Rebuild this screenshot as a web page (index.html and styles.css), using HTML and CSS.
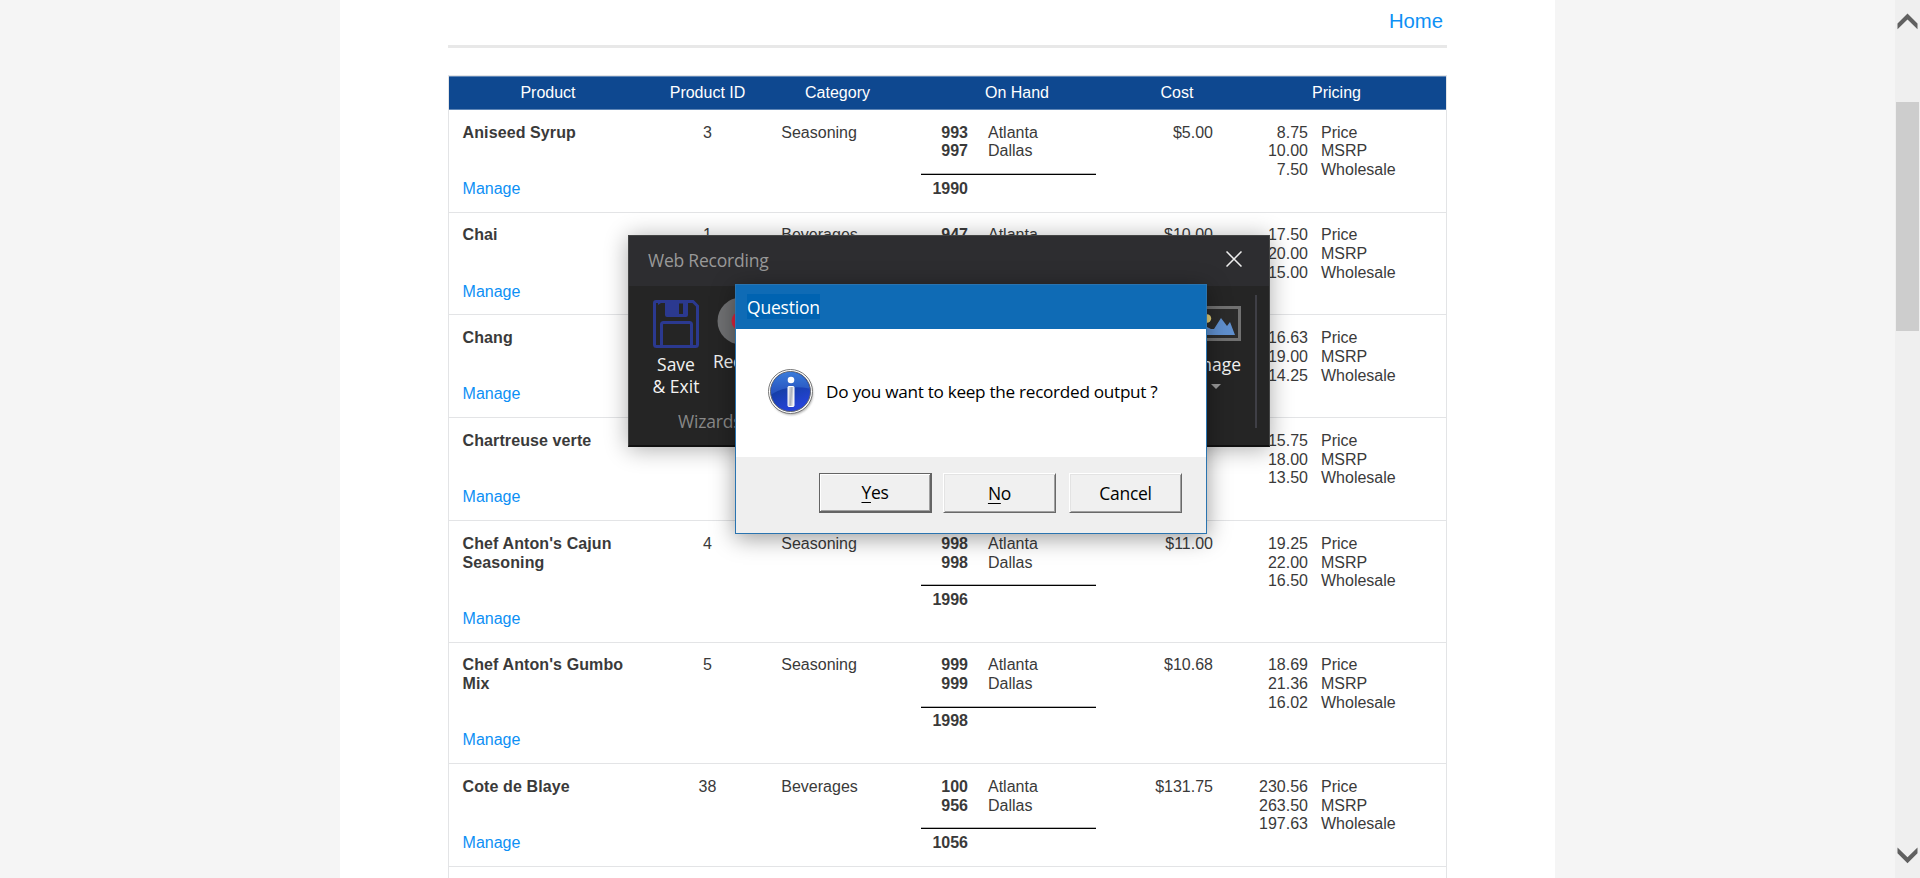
FILE: index.html
```html
<!DOCTYPE html>
<html lang="en">
<head>
<meta charset="utf-8">
<title>Products</title>
<link rel="stylesheet" href="styles.css">
</head>
<body>
<div class="page">
  <main class="sheet">
    <nav class="topnav"><a>Home</a></nav>
    <section class="products">
      <div class="row head"><div>Product</div><div>Product ID</div><div>Category</div><div>On Hand</div><div>Cost</div><div>Pricing</div></div>

      <div class="row">
        <div class="name"><b>Aniseed Syrup</b><a>Manage</a></div><div class="id">3</div><div class="cat">Seasoning</div>
        <div class="stock"><b>993</b><span>Atlanta</span><b>997</b><span>Dallas</span><hr><b>1990</b></div>
        <div class="cost">$5.00</div>
        <div class="pricing"><i>8.75</i><span>Price</span><i>10.00</i><span>MSRP</span><i>7.50</i><span>Wholesale</span></div>
      </div>

      <div class="row">
        <div class="name"><b>Chai</b><a>Manage</a></div><div class="id">1</div><div class="cat">Beverages</div>
        <div class="stock"><b>947</b><span>Atlanta</span></div>
        <div class="cost">$10.00</div>
        <div class="pricing"><i>17.50</i><span>Price</span><i>20.00</i><span>MSRP</span><i>15.00</i><span>Wholesale</span></div>
      </div>

      <div class="row">
        <div class="name"><b>Chang</b><a>Manage</a></div><div class="id"></div><div class="cat"></div>
        <div class="stock"></div>
        <div class="cost"></div>
        <div class="pricing"><i>16.63</i><span>Price</span><i>19.00</i><span>MSRP</span><i>14.25</i><span>Wholesale</span></div>
      </div>

      <div class="row">
        <div class="name"><b>Chartreuse verte</b><a>Manage</a></div><div class="id"></div><div class="cat"></div>
        <div class="stock"></div>
        <div class="cost"></div>
        <div class="pricing"><i>15.75</i><span>Price</span><i>18.00</i><span>MSRP</span><i>13.50</i><span>Wholesale</span></div>
      </div>

      <div class="row">
        <div class="name"><b>Chef Anton's Cajun Seasoning</b><a>Manage</a></div><div class="id">4</div><div class="cat">Seasoning</div>
        <div class="stock"><b>998</b><span>Atlanta</span><b>998</b><span>Dallas</span><hr><b>1996</b></div>
        <div class="cost">$11.00</div>
        <div class="pricing"><i>19.25</i><span>Price</span><i>22.00</i><span>MSRP</span><i>16.50</i><span>Wholesale</span></div>
      </div>

      <div class="row">
        <div class="name"><b>Chef Anton's Gumbo Mix</b><a>Manage</a></div><div class="id">5</div><div class="cat">Seasoning</div>
        <div class="stock"><b>999</b><span>Atlanta</span><b>999</b><span>Dallas</span><hr><b>1998</b></div>
        <div class="cost">$10.68</div>
        <div class="pricing"><i>18.69</i><span>Price</span><i>21.36</i><span>MSRP</span><i>16.02</i><span>Wholesale</span></div>
      </div>

      <div class="row">
        <div class="name"><b>Cote de Blaye</b><a>Manage</a></div><div class="id">38</div><div class="cat">Beverages</div>
        <div class="stock"><b>100</b><span>Atlanta</span><b>956</b><span>Dallas</span><hr><b>1056</b></div>
        <div class="cost">$131.75</div>
        <div class="pricing"><i>230.56</i><span>Price</span><i>263.50</i><span>MSRP</span><i>197.63</i><span>Wholesale</span></div>
      </div>
      <div class="row next"></div>
    </section>
  </main>
  <aside class="scrollbar">
    <svg class="arrow" width="21" height="17" viewBox="0 0 21 17"><path d="M0.5 10.5 10.5 0.5 20.5 10.5V16.2L10.5 6.5 0.5 16.2Z"/></svg>
    <div class="thumb"></div>
    <svg class="arrow down" width="21" height="17" viewBox="0 0 21 17"><path d="M0.5 0.5V6.2L10.5 16.2 20.5 6.2V0.5L10.5 10.2Z"/></svg>
  </aside>
</div>

<section class="recorder">
  <header class="rec-title"><span>Web Recording</span>
    <svg width="16" height="16" viewBox="0 0 16 16"><path d="M.5.5 15.5 15.5M15.5.5.5 15.5"/></svg>
  </header>
  <div class="ribbon">
    <div class="tool save">
      <svg width="46" height="48" viewBox="0 0 46 48">
        <path d="M3 1.5H40L44.5 6V44.5Q44.5 46.5 42.500 46.5H3.500Q1.500 46.500 1.500 44.500V3Q1.500 1.500 3 1.500Z" class="line"/>
        <path d="M8.500 46V24.500Q8.500 22.500 10.500 22.500H36.500Q38.500 22.500 38.500 24.500V46" class="line"/>
        <path d="M12 1H35V15Q35 17 33 17H14Q12 17 12 15ZM26 3.500V14H30V3.500Z" class="solid" fill-rule="evenodd"/>
        <path d="M5 3H8L5 5Z" class="solid"/>
      </svg>
      <span>Save<br>&amp; Exit</span>
    </div>
    <div class="tool record">
      <svg width="48" height="48" viewBox="0 0 48 48"><circle cx="24" cy="24" r="23.5" fill="#707173"/><circle cx="24" cy="24" r="9.500" fill="#e0263f"/></svg>
      <span>Record</span>
    </div>
    <div class="tool image">
      <svg width="49" height="35" viewBox="0 0 49 35"><rect x="1.500" y="1.500" width="46" height="32" fill="#2b2b2b" stroke="#717171" stroke-width="3"/><circle cx="15" cy="12.500" r="4.200" fill="#e6d27a"/><path d="M6 29V23L13 20 19 23H22L29 12 35 20 38 16 43 29Z" fill="#6090cf"/></svg>
      <span>Image</span>
      <svg class="caret" width="10" height="5" viewBox="0 0 10 5"><path d="M0 0H10L5 5Z"/></svg>
    </div>
    <div class="divider"></div>
    <div class="group">Wizards</div>
  </div>
</section>

<section class="question">
  <header><span>Question</span></header>
  <div class="message">
    <svg width="48" height="50" viewBox="0 0 48 50">
      <defs>
        <linearGradient id="blue" x1="0" y1="0" x2=".4" y2="1"><stop offset="0" stop-color="#2868cf"/><stop offset=".5" stop-color="#163fa9"/><stop offset="1" stop-color="#2543d8"/></linearGradient>
        <linearGradient id="gloss" x1="0" y1="0" x2="0" y2="1"><stop offset="0" stop-color="#3a7bd9"/><stop offset="1" stop-color="#2650bd"/></linearGradient>
        <linearGradient id="stem" x1="0" y1="0" x2="1" y2=".3"><stop offset="0" stop-color="#eee"/><stop offset=".6" stop-color="#aeb2bd"/><stop offset="1" stop-color="#eee"/></linearGradient>
        <filter id="soft"><feGaussianBlur stdDeviation="1.200"/></filter>
      </defs>
      <circle cx="23.500" cy="24.500" r="21.500" fill="#777" opacity=".6" filter="url(#soft)"/>
      <circle cx="22.500" cy="22.500" r="22" fill="#fff" stroke="#777" stroke-width="1"/>
      <circle cx="22.500" cy="22.500" r="20" fill="url(#blue)" stroke="#65686f" stroke-width="1"/>
      <path d="M3.200 25.500A19.300 19.300 0 1 1 41.500 19.500Q18 15.500 3.200 25.500Z" fill="url(#gloss)"/>
      <circle cx="23" cy="11" r="3.300" fill="#fff"/>
      <rect x="20" y="17.500" width="6" height="20" rx=".8" fill="url(#stem)" stroke="#fff"/>
    </svg>
    <p>Do you want to keep the recorded output ?</p>
  </div>
  <footer>
    <button class="default"><u>Y</u>es</button>
    <button><u>N</u>o</button>
    <button class="cancel">Cancel</button>
  </footer>
</section>
</body>
</html>
```
FILE: styles.css
```css
* { box-sizing: border-box; }
html, body { margin: 0; height: 878px; overflow: hidden; }
body { position: relative; background: #f5f5f5; color: #3a3a3a; font: 16px/18.7px "Liberation Sans", Arial, sans-serif; }
a { color: #0d90f5; }

.page { display: flex; justify-content: space-between; height: 878px; padding-left: 340px; overflow: hidden; }
.sheet { width: 1215px; height: 878px; padding: 0 108px; background: #fff; overflow: hidden; }
.topnav { height: 48px; padding: 8px 4px 0 0; border-bottom: 3px solid #e8e8e8; text-align: right; font-size: 20.300px; line-height: 26px; }

.products { width: 999px; margin-top: 27px; border: 1px solid #e3e4e6; border-bottom: 0; }
.row { display: grid; grid-template-columns: 198px 121px 139px 220px 100px 219px; padding: 13.750px 0 13.250px; border-bottom: 1px solid #e3e4e6; }
.row.head { height: 33.900px; padding: 6px 0 0; background: #0e4890; border: 1px solid #5f86b6; border-width: 1px 0; color: #fff; text-align: center; line-height: 20px; }
.row.next { height: 40px; }
.name { display: flex; flex-direction: column; padding: 0 18px 0 13.600px; }
.name b { letter-spacing: .1px; }
.name a { margin-top: 37.400px; }
.id { text-align: center; }
.cat { padding-left: 13.300px; }
.stock { display: grid; grid-template-columns: 47px 115px; grid-auto-rows: min-content; column-gap: 20px; padding-left: 14px; }
.stock b, .pricing i { text-align: right; font-style: normal; }
.stock hr { grid-column: 1 / 3; width: 175px; height: 14.100px; margin: 0 0 4.600px; border: 0; border-bottom: 1px solid #000; box-shadow: inset 0 -1px #b5b5b5; }
.cost { padding-right: 14px; text-align: right; }
.pricing { display: grid; grid-template-columns: 81px 1fr; grid-auto-rows: min-content; column-gap: 13px; }

.scrollbar { display: flex; flex-direction: column; align-items: center; width: 25px; padding: 13px 0 14px; background: #efefef; }
.arrow { flex: none; fill: #606060; }
.arrow.down { margin-top: auto; }
.thumb { width: 23px; height: 229px; margin-top: 72px; background: #cdcdcd; }

.recorder, .question { position: absolute; font-family: "Open Sans", "Noto Sans", sans-serif; font-size: 17.500px; line-height: 22px; }
.recorder { left: 628px; top: 235px; width: 642px; height: 212px; border: 1px solid #434444; border-bottom: 2px solid #111; background: #252525; color: #f2f2f2; box-shadow: 0 2px 22px rgba(0, 0, 0, .33); }
.rec-title { display: flex; justify-content: space-between; align-items: flex-start; height: 50px; padding: 13px 27px 0 19px; background: #2d2d30; color: #999; letter-spacing: -.22px; }
.rec-title svg { margin-top: 2px; fill: none; stroke: #eee; stroke-width: 1.500; }
.ribbon { position: relative; height: 159px; }
.tool { position: absolute; display: flex; flex-direction: column; align-items: center; text-align: center; white-space: nowrap; }
.save { left: 17px; top: 14px; width: 60px; }
.save span { margin-top: 5px; }
.line { fill: none; stroke: #2b3990; stroke-width: 3; }
.solid { fill: #2b3990; }
.record { left: 78px; top: 11px; width: 68px; }
.record span { margin-top: 5px; letter-spacing: -.2px; }
.image { left: 557px; top: 20px; width: 60px; }
.image span { margin-top: 12px; }
.caret { margin-top: 9px; fill: #999; }
.divider { position: absolute; left: 626px; top: 9px; width: 2px; height: 133px; background: #3f3f46; }
.group { position: absolute; left: 49px; top: 124px; color: #888; letter-spacing: -.2px; }

.question { left: 735px; top: 284px; width: 472px; height: 250px; border: 1px solid #2a74b0; background: #fff; color: #000; box-shadow: 0 4px 22px rgba(0, 0, 0, .4); }
.question header { height: 44px; padding: 9px 11px; background: #0f6bb5; color: #fff; letter-spacing: -.2px; }
.question header span { display: inline-block; height: 25px; line-height: 27px; background: #0063b1; }
.message { display: flex; height: 128px; padding: 40px 0 0 32px; }
.message p { margin: 12px 0 0 10px; white-space: nowrap; font-size: 17.200px; letter-spacing: -.3px; }
.question footer { display: flex; height: 76px; padding: 16px 24px 0 83px; gap: 12px; background: #efefef; }
.question button { width: 113px; height: 40px; padding: 0 0 1px; border: 1px solid; border-color: #fff #696969 #696969 #fff; background: #f0f0f0; box-shadow: inset 1px 1px #e3e3e3, inset -1px -1px #a0a0a0; color: #000; font: inherit; letter-spacing: -.3px; }
.question button.default { border: 1px solid #646464; border-right-width: 2px; border-bottom-width: 2px; box-shadow: inset 1px 1px #fff, inset -1px -1px #a0a0a0; margin-right: -1px; }
.question button.cancel { margin-left: 1px; }
.question button u { text-underline-offset: 3px; text-decoration-thickness: 1px; }
```
